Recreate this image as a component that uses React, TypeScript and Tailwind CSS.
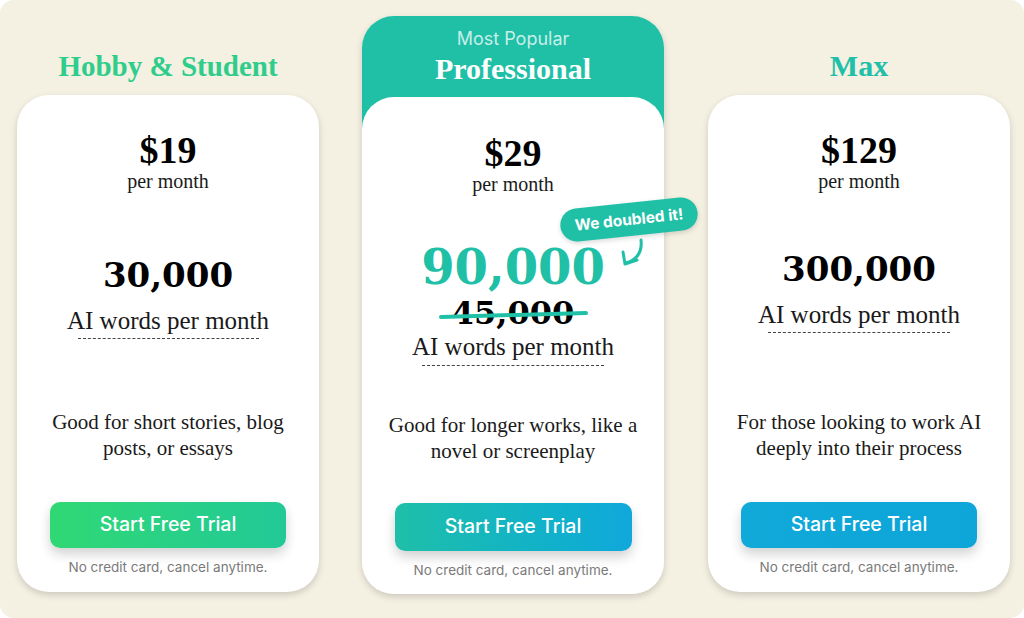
import React from 'react';

const serif = "font-['Liberation_Serif',serif]";
const numSerif = "font-['DejaVu_Serif',serif]";
const sans = "font-['Inter',sans-serif]";

function Price({ amount }: { amount: string }) {
  return (
    <>
      <div className={`${serif} text-[38px] leading-[40px] font-bold text-black`}>{amount}</div>
      <div className={`${serif} text-[20px] leading-[22px] text-[#1a1a1a]`}>per month</div>
    </>
  );
}

function WordsLabel() {
  return (
    <div className={`${serif} text-[25px] leading-[30px] text-[#1a1a1a]`}>AI words per month</div>
  );
}

function Footer({ gradient, tall }: { gradient: string; tall?: boolean }) {
  return (
    <>
      <button
        className={`${sans} ${gradient} ${tall ? 'h-[48px] w-[237px] mt-[39px]' : 'h-[46px] w-[236px] mt-[41px]'} rounded-[10px] text-white text-[19.5px] font-medium shadow-[0_6px_12px_rgba(0,0,0,0.18)]`}
      >
        Start Free Trial
      </button>
      <div className={`${sans} mt-[11px] text-[13.5px] leading-[16px] text-[#7a7a7a]`}>
        No credit card, cancel anytime.
      </div>
    </>
  );
}

export default function App() {
  return (
    <div className="w-full h-[618px] bg-white">
      <div className="h-[618px] bg-[#f4f0e2] rounded-[14px] flex items-start gap-[43px] pl-[17px] pt-[16px]">
        {/* Hobby & Student */}
        <div className="w-[302px] flex flex-col">
          <div className="h-[79px] flex items-end justify-center pb-[11px]">
            <h2 className={`${serif} text-[29px] leading-[36px] font-bold text-[#2fcd8b]`}>Hobby &amp; Student</h2>
          </div>
          <div className="h-[497px] bg-white rounded-[32px] shadow-[0_3px_7px_rgba(0,0,0,0.16)] flex flex-col items-center pt-[35px]">
            <Price amount="$19" />
            <div className={`${numSerif} mt-[63px] text-[34px] leading-[40px] font-bold text-black`}>30,000</div>
            <div className="mt-[11px]">
              <WordsLabel />
            </div>
            <div className="w-[181px] mt-[2px] border-t border-dashed border-[#444]" />
            <p className={`${serif} mt-[70px] max-w-[252px] text-center text-[21px] leading-[26px] text-[#1a1a1a]`}>
              Good for short stories, blog posts, or essays
            </p>
            <Footer gradient="bg-gradient-to-r from-[#30d874] to-[#22c996]" />
          </div>
        </div>

        {/* Professional */}
        <div className="w-[302px] flex flex-col rounded-[32px] shadow-[0_3px_7px_rgba(0,0,0,0.16)]">
          <div className="h-[113px] bg-[#20c0a7] rounded-t-[32px] flex flex-col items-center pt-[13px]">
            <div className={`${sans} text-[18px] leading-[20px] text-white/75`}>Most Popular</div>
            <h2 className={`${serif} mt-[2px] text-[30px] leading-[36px] font-bold text-white`}>Professional</h2>
          </div>
          <div className="relative -mt-[32px] h-[497px] bg-white rounded-[32px] flex flex-col items-center pt-[36px]">
            <Price amount="$29" />
            <div className={`${numSerif} mt-[46px] text-[48px] leading-[52px] font-bold text-[#20c0a7]`}>90,000</div>
            <div className="relative mt-[3px]">
              <div className={`${numSerif} text-[32px] leading-[34px] font-bold text-black`}>45,000</div>
              <div className="absolute left-[-13px] right-[-14px] top-[17px] h-[4px] rounded-full bg-[#20c0a7] -rotate-[1.5deg]" />
            </div>
            <div className="mt-[2px]">
              <WordsLabel />
            </div>
            <div className="w-[182px] mt-[3px] border-t border-dashed border-[#444]" />
            <p className={`${serif} mt-[46px] max-w-[252px] text-center text-[21px] leading-[26px] text-[#1a1a1a]`}>
              Good for longer works, like a novel or screenplay
            </p>
            <Footer gradient="bg-gradient-to-r from-[#1fbfa8] to-[#10a8db]" tall />

            <div className={`${sans} absolute left-[198px] top-[106px] w-[138px] h-[33px] rounded-full bg-[#20c0a7] -rotate-6 flex items-center justify-center text-white text-[15.5px] font-bold shadow-[0_2px_5px_rgba(0,0,0,0.15)]`}>
              We doubled it!
            </div>
            <svg className="absolute left-0 top-0 overflow-visible" width="300" height="200" fill="none">
              <path d="M279 143 Q281 161 264 166" stroke="#20c0a7" strokeWidth="3" strokeLinecap="round" />
              <path d="M261 155 L263 167 L275 163" stroke="#20c0a7" strokeWidth="3" strokeLinecap="round" strokeLinejoin="round" />
            </svg>
          </div>
        </div>

        {/* Max */}
        <div className="w-[302px] ml-[1px] flex flex-col">
          <div className="h-[79px] flex items-end justify-center pb-[11px]">
            <h2 className={`${serif} text-[30px] leading-[36px] font-bold text-[#20bfa9]`}>Max</h2>
          </div>
          <div className="h-[497px] bg-white rounded-[32px] shadow-[0_3px_7px_rgba(0,0,0,0.16)] flex flex-col items-center pt-[35px]">
            <Price amount="$129" />
            <div className={`${numSerif} mt-[57px] text-[34px] leading-[40px] font-bold text-black`}>300,000</div>
            <div className="mt-[11px]">
              <WordsLabel />
            </div>
            <div className="w-[182px] mt-[2px] border-t border-dashed border-[#444]" />
            <p className={`${serif} mt-[76px] max-w-[252px] text-center text-[21px] leading-[26px] text-[#1a1a1a]`}>
              For those looking to work AI deeply into their process
            </p>
            <Footer gradient="bg-gradient-to-r from-[#10a9d8] to-[#0ea5d9]" />
          </div>
        </div>
      </div>
    </div>
  );
}
